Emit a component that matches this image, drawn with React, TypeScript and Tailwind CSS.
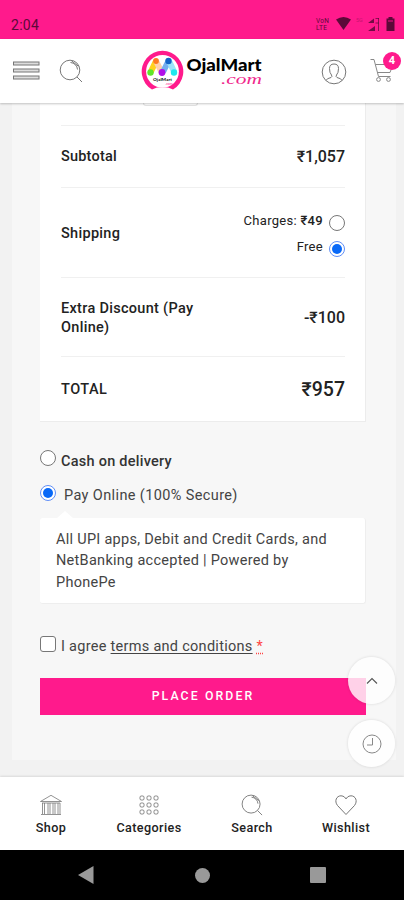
import React from "react";

function SearchIcon({ className }: { className?: string }) {
  return (
    <svg className={className} viewBox="0 0 24 24" fill="none" stroke="currentColor" strokeWidth="1">
      <circle cx="11" cy="11" r="9.8" />
      <path d="M18 18l5 5M11.500 3.500a7.500 7.500 0 0 1 7 7M12.500 1.800l7 5.500" />
    </svg>
  );
}

function Logo() {
  return (
    <svg className="h-[42px] w-[43px] shrink-0" viewBox="0 0 43 42">
      <path d="M11 39.500A20.800 20.800 0 1 1 32 39.500L27 37.500H16Z" fill="#ff1a8c" />
      <circle cx="21.500" cy="21.300" r="16.400" fill="#fff" />
      <g strokeWidth="6" strokeLinecap="round" fill="none">
        <path d="M10 21.500L14.500 12" stroke="#ffd21c" />
        <path d="M15.500 12L20 21" stroke="#ffd0ac" />
        <path d="M27 12L22.500 21" stroke="#75aef0" />
        <path d="M28.500 12L33 21.500" stroke="#9ce4fa" />
      </g>
      <circle cx="15" cy="11" r="2.900" fill="#ff7a1f" />
      <circle cx="27.500" cy="11" r="3.200" fill="#1463c8" />
      <circle cx="9.500" cy="22.500" r="3.200" fill="#5ee62a" />
      <circle cx="21" cy="22.500" r="3.400" fill="#b010e8" />
      <circle cx="33" cy="22.500" r="3.200" fill="#20e8ee" />
      <text x="21.500" y="31" textAnchor="middle" fontSize="4.500" fontWeight="700" textLength="19" lengthAdjust="spacingAndGlyphs" fontFamily="Lato, sans-serif">OjalMart</text>
      <text x="28" y="35" textAnchor="middle" fontSize="3.500" fill="#ff1a8c" fontFamily="Lato, sans-serif">.com</text>
    </svg>
  );
}

function Wordmark() {
  return (
    <svg className="ml-0.5 h-[42px] w-[82px] shrink-0" viewBox="0 0 82 42">
      <text x="0.500" y="20.500" fontSize="17.500" fontWeight="900" textLength="75" lengthAdjust="spacingAndGlyphs" fontFamily="Lato, sans-serif">OjalMart</text>
      <text x="35" y="34" fontSize="15" fontStyle="italic" fill="#f0288c" textLength="41" lengthAdjust="spacingAndGlyphs" fontFamily="'Liberation Serif', serif">.com</text>
    </svg>
  );
}

function StatusBar() {
  return (
    <div className="flex h-[39px] shrink-0 items-start justify-between bg-[#ff1a8c] pl-[11px] pt-[15px] text-[#5c0938]">
      <span className="text-[14px] leading-[20px] tracking-[0.3px]">2:04</span>
      <svg className="h-[20px] w-[90px]" viewBox="314 15 90 20" fill="currentColor">
        <text x="316" y="22.500" fontSize="6.500" textLength="13" fontFamily="Roboto, sans-serif">VoN</text>
        <text x="316" y="30" fontSize="6.500" textLength="11" fontFamily="Roboto, sans-serif">LTE</text>
        <path d="M336 19.500Q343.500 14.500 351 19.500L343.500 30Z" />
        <text x="356" y="22" fontSize="5.500" opacity=".35" fontFamily="Roboto, sans-serif">5G</text>
        <path d="M368 23L374 18.500V23ZM368 31L375 26V31Z" opacity=".85" />
        <path d="M375.500 18.500H379M375.500 23H379M378.500 18V31" stroke="currentColor" fill="none" opacity=".7" />
        <path d="M388.500 17H392.500V18.500H394.500V31H386.500V18.500H388.500Z" />
        <path d="M388 20H393V22H388Z" fill="#a70a60" />
      </svg>
    </div>
  );
}

function Header() {
  return (
    <header className="relative z-10 flex h-[64px] shrink-0 items-start bg-white text-[#777] shadow-[0_1px_2px_rgba(0,0,0,0.22)]">
      <svg className="ml-[13px] mt-[22px] h-[20px] w-[27px]" viewBox="0 0 27 20" fill="#ddd" stroke="#777" strokeWidth="1">
        <rect x="0.500" y="1" width="25.500" height="3" />
        <rect x="0.500" y="8" width="25.500" height="3" />
        <rect x="0.500" y="15" width="25.500" height="3" />
      </svg>
      <SearchIcon className="ml-[19px] mt-[20px] size-[24px]" />
      <div className="ml-[58px] mt-[11px] flex text-black">
        <Logo />
        <Wordmark />
      </div>
      <svg className="ml-[53px] mt-[20px] size-[26px]" viewBox="0 0 26 26" fill="none" stroke="#777">
        <circle cx="13" cy="13" r="11.800" />
        <path d="M5 21.500Q5.500 19.500 10 18.500Q11.500 18 10.500 16Q8.500 14 8.500 9.500Q8.500 5 13 5Q17.500 5 17.500 9.500Q17.500 14 15.500 16Q14.500 18 16 18.500Q20.500 19.500 21 21.500" />
      </svg>
      <div className="relative ml-[23px] mt-[19px]">
        <svg className="h-[26px] w-[27px]" viewBox="0 0 27 26" fill="none" stroke="#888">
          <path d="M0.500 1.500H4L8.500 18.500H20.500M5.500 6.500H23L20 14.500H7.500" />
          <circle cx="8.500" cy="21.500" r="1.900" />
          <circle cx="18.500" cy="21.500" r="1.900" />
        </svg>
        <span className="absolute left-[13px] top-[-6px] flex size-[18px] items-center justify-center rounded-full bg-[#ff1a8c] text-[11px] font-bold text-white">4</span>
      </div>
    </header>
  );
}

function Radio({ checked = false }: { checked?: boolean }) {
  return (
    <span className={checked
      ? "flex size-[16px] shrink-0 items-center justify-center rounded-full border border-[#5f8ef7] bg-white"
      : "flex size-[16px] shrink-0 items-center justify-center rounded-full border border-[#777] bg-white"}>
      {checked && <span className="size-[10px] rounded-full bg-[#0868f7]" />}
    </span>
  );
}

function Totals() {
  return (
    <section className="h-[319px] border-b border-r border-[#ececec] bg-white pl-[21px] pr-[20px] text-[14.500px] font-medium text-[#222]">
      <div className="flex h-[23px] justify-center border-b border-[#f0f0f0] pr-[65px]">
        <span className="h-[3px] w-[55px] rounded-b-sm border border-t-0 border-[#e3e3e3]" />
      </div>
      <div className="flex h-[62px] items-center justify-between border-b border-[#f0f0f0]">
        <span className="tracking-[0.2px]">Subtotal</span>
        <span className="text-[16px]">₹1,057</span>
      </div>
      <div className="flex h-[90px] items-center justify-between border-b border-[#f0f0f0]">
        <span className="pt-[2px] tracking-[0.300px]">Shipping</span>
        <div className="flex flex-col items-end gap-[10px] pt-[7px] text-[13px] font-normal leading-[16px] tracking-[0.3px]">
          <span className="flex gap-[6px]"><span className="relative -top-[2px]">Charges: <b className="font-medium">₹49</b></span><Radio /></span>
          <span className="flex gap-[6px]"><span className="relative -top-[2px]">Free</span><Radio checked /></span>
        </div>
      </div>
      <div className="flex h-[79px] items-center justify-between border-b border-[#f0f0f0]">
        <span className="w-[150px] pt-px leading-[19px] tracking-[0.300px]">Extra Discount (Pay Online)</span>
        <span className="pt-px text-[16px]">-₹100</span>
      </div>
      <div className="flex h-[64px] items-center justify-between pt-[2px]">
        <span className="tracking-[0.500px]">TOTAL</span>
        <span className="text-[19.500px]">₹957</span>
      </div>
    </section>
  );
}

function Payment() {
  return (
    <section className="text-[14.500px] text-[#444]">
      <div className="mt-[28px] flex h-[20px] items-start gap-[5px]">
        <Radio />
        <span className="pt-[2px] font-medium leading-[20px] tracking-[0.25px] text-[#333]">Cash on delivery</span>
      </div>
      <div className="mt-[15px] flex h-[20px] items-start gap-[8px]">
        <Radio checked />
        <span className="pt-px leading-[20px] tracking-[0.380px]">Pay Online (100% Secure)</span>
      </div>
      <div className="ml-[17px] mt-[6px] size-0 border-x-[8px] border-b-[7px] border-x-transparent border-b-white" />
      <div className="h-[86px] rounded-[3px] border-b border-r border-[#eee] bg-white pl-4 pt-[11px] leading-[21.300px] tracking-[0.280px]">
        All UPI apps, Debit and Credit Cards, and<br />NetBanking accepted | Powered by<br />PhonePe
      </div>
      <div className="mt-[32px] flex h-[20px] items-start">
        <span className="size-[16px] rounded-[3px] border border-[#777] bg-white" />
        <span className="ml-[5px] pt-px leading-[20px] tracking-[0.280px]">I agree <span className="underline underline-offset-2">terms and conditions</span> <span className="text-[#ff4444] underline decoration-dotted underline-offset-2">*</span></span>
      </div>
      <button className="mt-[22px] flex h-[37px] w-full items-center justify-center bg-[#ff1a8c] text-[12.300px] font-medium tracking-[2.100px] text-white">PLACE ORDER</button>
    </section>
  );
}

function ShopIcon() {
  return (
    <svg className="size-[22px]" viewBox="0 0 22 22" fill="none" stroke="#777" strokeWidth="0.800">
      <path d="M0.500 7.500L11 1.300L21.500 7.500ZM2 9H20M1 20.500H21M2.500 9V20M4.500 9V20M8 9V20M10 9V20M13 9V20M15 9V20M18 9V20M20 9V20" />
    </svg>
  );
}

function GridIcon() {
  return (
    <svg className="size-[22px]" viewBox="0 0 22 22" fill="none" stroke="#777" strokeWidth="0.900">
      {[4, 11, 18].map((y) => [4, 11, 18].map((x) => <rect key={x + "-" + y} x={x - 2} y={y - 2} width="4" height="4" rx="1.300" />))}
    </svg>
  );
}

function HeartIcon() {
  return (
    <svg className="size-[22px]" viewBox="0 0 22 22" fill="none" stroke="#777" strokeWidth="1">
      <path d="M11 20.500L2.500 11.500C-1 7 1.500 1.800 6 1.800C9 1.800 10.500 4 11 5C11.500 4 13 1.800 16 1.800C20.500 1.800 23 7 19.500 11.500Z" />
    </svg>
  );
}

function BottomNav() {
  const item = "flex flex-col items-center gap-[3px]";
  return (
    <nav className="relative flex h-[73px] shrink-0 items-start bg-white pl-[35px] pt-[17px] text-[12.600px] font-medium leading-[17px] tracking-[0.400px] text-[#222] shadow-[0_-1px_2px_rgba(0,0,0,0.1)]">
      <div className={item + " w-[32px]"}><ShopIcon />Shop</div>
      <div className={item + " ml-[47px] w-[70px]"}><GridIcon />Categories</div>
      <div className={item + " ml-[43px] w-[50px]"}><SearchIcon className="size-[22px] text-[#777]" />Search</div>
      <div className={item + " ml-[44px] w-[50px]"}><HeartIcon />Wishlist</div>
    </nav>
  );
}

export default function App() {
  return (
    <div className="relative flex h-[900px] w-[404px] flex-col overflow-hidden bg-[#f2f2f2] font-[Roboto,sans-serif]">
      <StatusBar />
      <Header />
      <main className="h-[674px] shrink-0 px-[12px]">
        <div className="h-[657px] w-[384px] bg-[#f7f7f7] pl-[28px] pr-[30px]">
          <Totals />
          <Payment />
        </div>
      </main>
      <div className="absolute left-[348px] top-[657px] flex size-[47px] items-center justify-center rounded-full bg-white/80 shadow-[0_0_3px_rgba(0,0,0,0.14)]">
        <svg className="size-[12px]" viewBox="0 0 12 12" fill="none" stroke="#555" strokeWidth="1.100"><path d="M1 8.500L6 3.500L11 8.500" /></svg>
      </div>
      <div className="absolute left-[348px] top-[720px] flex size-[47px] items-center justify-center rounded-full bg-white/90 shadow-[0_0_3px_rgba(0,0,0,0.14)]">
        <svg className="size-[20px]" viewBox="0 0 20 20" fill="none" stroke="#888"><circle cx="10" cy="10" r="9" /><path d="M10.500 4V11H5" /></svg>
      </div>
      <BottomNav />
      <div className="flex h-[50px] shrink-0 items-center bg-black">
        <svg className="ml-[78px] h-[18px] w-[16px]" viewBox="0 0 16 18" fill="#999"><path d="M0 9L15.500 0V18Z" /></svg>
        <span className="ml-[101px] size-[15px] rounded-full bg-[#999]" />
        <span className="ml-[100px] size-[16px] rounded-[1px] bg-[#999]" />
      </div>
    </div>
  );
}
